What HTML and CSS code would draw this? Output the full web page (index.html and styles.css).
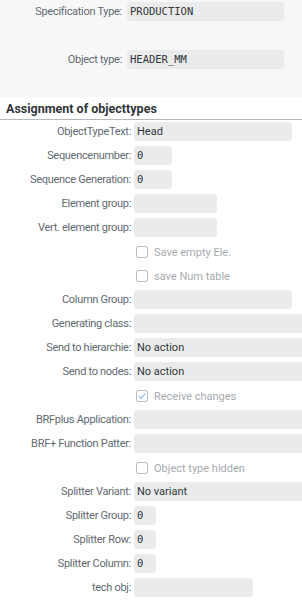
FILE: index.html
```html
<html>

<head>
  <link rel="stylesheet" href="styles.css">
</head>

<body>
  <div id="header">
    <div class="headRow">
      <span class="headLabel">Specification Type:</span>
      <span class="field mono headField">PRODUCTION</span>
    </div>
    <div class="headRow">
      <span class="headLabel">Object type:</span>
      <span class="field mono headField">HEADER_MM</span>
    </div>
  </div>

  <div id="assignment">
    <h2 class="sectionTitle">Assignment of objecttypes</h2>
    <div class="form">
      <span class="label">ObjectTypeText:</span>
      <span class="field w158">Head</span>

      <span class="label">Sequencenumber:</span>
      <span class="field mono w38">0</span>

      <span class="label">Sequence Generation:</span>
      <span class="field mono w38">0</span>

      <span class="label">Element group:</span>
      <span class="field w83"></span>

      <span class="label">Vert. element group:</span>
      <span class="field w83"></span>

      <span class="label"></span>
      <label class="check"><span class="box"></span>Save empty Ele.</label>

      <span class="label"></span>
      <label class="check"><span class="box"></span>save Num table</label>

      <span class="label">Column Group:</span>
      <span class="field w158"></span>

      <span class="label">Generating class:</span>
      <span class="field wide"></span>

      <span class="label">Send to hierarchie:</span>
      <span class="field wide">No action</span>

      <span class="label">Send to nodes:</span>
      <span class="field wide">No action</span>

      <span class="label"></span>
      <label class="check">
        <span class="box">
          <svg width="10" height="10" viewBox="0 0 10 10"><path d="M1.8 5.2 L4 7.4 L8.4 2.4" fill="none" stroke="#8fb8e0" stroke-width="1.1"/></svg>
        </span>Receive changes
      </label>

      <span class="label">BRFplus Application:</span>
      <span class="field wide"></span>

      <span class="label">BRF+ Function Patter:</span>
      <span class="field wide"></span>

      <span class="label"></span>
      <label class="check"><span class="box"></span>Object type hidden</label>

      <span class="label">Splitter Variant:</span>
      <span class="field wide">No variant</span>

      <span class="label">Splitter Group:</span>
      <span class="field mono w22">0</span>

      <span class="label">Splitter Row:</span>
      <span class="field mono w22">0</span>

      <span class="label">Splitter Column:</span>
      <span class="field mono w22">0</span>

      <span class="label">tech obj:</span>
      <span class="field w119"></span>
    </div>
  </div>
</body>

</html>
```

FILE: styles.css
```css
body {
  margin: 0;
  color: #32363a;
  font-family: Roboto, "Liberation Sans", sans-serif;
  font-size: 11px;
  background: #ffffff;
}

#header {
  height: 97px;
  background: #f7f7f7;
  padding-top: 2px;
  box-sizing: border-box;
}

.headRow {
  display: flex;
  align-items: center;
  height: 19px;
  margin-bottom: 29px;
}

.headLabel {
  width: 127px;
  text-align: right;
  color: #626a73;
  letter-spacing: -0.3px;
  padding-right: 5px;
  box-sizing: border-box;
  flex-shrink: 0;
}

.headField {
  width: 157px;
  padding-left: 2px;
}

.sectionTitle {
  margin: 0;
  padding: 5px 0 0 6px;
  height: 17px;
  font-size: 12.5px;
  font-weight: bold;
  line-height: 14px;
  border-bottom: 1px solid #b5b9bd;
  color: #32363a;
}

.form {
  display: grid;
  grid-template-columns: 131px 1fr;
  column-gap: 3px;
  row-gap: 5px;
  padding-top: 2px;
  grid-auto-rows: 19px;
}

.label {
  text-align: right;
  color: #626a73;
  letter-spacing: -0.3px;
  line-height: 19px;
  white-space: nowrap;
}

.field {
  display: block;
  height: 19px;
  line-height: 19px;
  background: #eaebec;
  border-radius: 4px;
  padding: 0 3px;
  box-sizing: border-box;
  white-space: nowrap;
  color: #32363a;
}

.mono {
  font-family: "DejaVu Sans Mono", "Liberation Mono", monospace;
  font-size: 10.5px;
}

.w158 {
  width: 158px;
}

.w38 {
  width: 38px;
}

.w83 {
  width: 83px;
}

.w22 {
  width: 22px;
}

.w119 {
  width: 119px;
}

.wide {
  border-radius: 4px 0 0 4px;
}

.check {
  display: flex;
  align-items: center;
  color: #a7abaf;
  padding: 1px 0 0 2px;
}

.box {
  width: 10px;
  height: 10px;
  border: 1px solid #b8bcc0;
  border-radius: 3px;
  margin-right: 6px;
  display: flex;
  align-items: center;
  justify-content: center;
}
```
